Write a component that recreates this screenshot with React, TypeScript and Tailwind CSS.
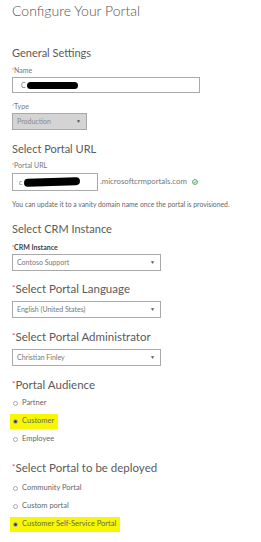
const Star = () => <span className="relative -top-[0.25em] text-[0.7em] text-[#e05050]">*</span>;

const Label = ({ text, bold }: { text: string; bold?: boolean }) => (
  <div
    className={`h-[10px] text-[7px] leading-[10px] ${bold ? "font-bold text-[#444]" : "text-[#777]"}`}
  >
    <Star />
    {text}
  </div>
);

const Select = ({ value, width, disabled }: { value: string; width: string; disabled?: boolean }) => (
  <div
    className={`flex h-[17px] items-center justify-between border border-[#a9a9a9] pl-[4px] pr-[5px] text-[7px] ${width} ${
      disabled ? "bg-[#d4d4d4] text-[#8a8a8a]" : "bg-white text-[#777]"
    }`}
  >
    <span>{value}</span>
    <span className="text-[5px] text-[#555]">▼</span>
  </div>
);

const Radio = ({ text, checked, mark }: { text: string; checked?: boolean; mark?: boolean }) => (
  <div className="flex h-[18px] items-center">
    <div
      className={`flex items-center gap-[4px] pl-[3px] pr-[4px] ${mark ? "h-[15px] bg-[#f7f700]" : ""}`}
    >
      <span className="flex h-[5px] w-[5px] items-center justify-center rounded-full border border-[#aaa] bg-white">
        {checked && <span className="h-[3px] w-[3px] rounded-full bg-[#333]" />}
      </span>
      <span className="text-[7.5px] text-[#666]">{text}</span>
    </div>
  </div>
);

export default function App() {
  return (
    <div className="h-[542px] w-[261px] overflow-hidden bg-white pl-[12px] font-['Lato',sans-serif] text-[#5a5a5a]">
      <h1 className="h-[22px] text-[14px] font-light leading-[22px] text-[#555]">
        Configure Your Portal
      </h1>

      {/* General settings */}
      <h2 className="mt-[22px] h-[18px] text-[11px] leading-[18px]">General Settings</h2>
      <div className="mt-[3px]">
        <Label text="Name" />
      </div>
      <div className="mt-[2px] flex h-[16px] w-[188px] items-center border border-[#a9a9a9] pl-[8px] text-[7px] text-[#777]">
        C<span className="ml-[1px] h-[7px] w-[51px] rounded-full bg-black" />
      </div>
      <div className="mt-[8px]">
        <Label text="Type" />
      </div>
      <div className="mt-[2px]">
        <Select value="Production" width="w-[75px]" disabled />
      </div>

      {/* Portal URL */}
      <h2 className="mt-[10px] h-[18px] text-[11px] leading-[18px]">Select Portal URL</h2>
      <div className="mt-[2px]">
        <Label text="Portal URL" />
      </div>
      <div className="mt-[3px] flex items-center">
        <div className="flex h-[18px] w-[86px] items-center border border-[#a9a9a9] pl-[6px] text-[7px] text-[#777]">
          c<span className="ml-[2px] h-[8px] w-[56px] -rotate-2 rounded-full bg-black" />
        </div>
        <span className="ml-[2px] text-[7.8px] text-[#777]">.microsoftcrmportals.com</span>
        <svg className="ml-[5px]" width="6" height="6" viewBox="0 0 6 6">
          <circle cx="3" cy="3" r="2.4" fill="none" stroke="#3a9a4a" strokeWidth="0.9" />
          <path d="M1.8 3.1 L2.7 3.9 L4.2 2.2" fill="none" stroke="#3a9a4a" strokeWidth="0.9" />
        </svg>
      </div>
      <div className="mt-[8px] h-[10px] text-[6.8px] leading-[10px] text-[#666]">
        You can update it to a vanity domain name once the portal is provisioned.
      </div>

      {/* CRM instance */}
      <h2 className="mt-[11px] h-[18px] text-[11px] leading-[18px]">Select CRM Instance</h2>
      <div className="mt-[4px]">
        <Label text="CRM Instance" bold />
      </div>
      <div className="mt-[2px]">
        <Select value="Contoso Support" width="w-[149px]" />
      </div>

      <h2 className="mt-[9px] h-[18px] text-[11.5px] leading-[18px]">
        <Star />
        Select Portal Language
      </h2>
      <div className="mt-[3px]">
        <Select value="English (United States)" width="w-[149px]" />
      </div>

      <h2 className="mt-[10px] h-[18px] text-[11.5px] leading-[18px]">
        <Star />
        Select Portal Administrator
      </h2>
      <div className="mt-[3px]">
        <Select value="Christian Finley" width="w-[149px]" />
      </div>

      <h2 className="mt-[10px] h-[18px] text-[11.5px] leading-[18px]">
        <Star />
        Portal Audience
      </h2>
      <div className="-ml-[2px]">
        <Radio text="Partner" />
        <Radio text="Customer" checked mark />
        <Radio text="Employee" />
      </div>

      <h2 className="mt-[11px] h-[18px] text-[11.5px] leading-[18px]">
        <Star />
        Select Portal to be deployed
      </h2>
      <div className="-ml-[2px] mt-[2px]">
        <Radio text="Community Portal" />
        <Radio text="Custom portal" />
        <Radio text="Customer Self-Service Portal" checked mark />
      </div>
    </div>
  );
}
